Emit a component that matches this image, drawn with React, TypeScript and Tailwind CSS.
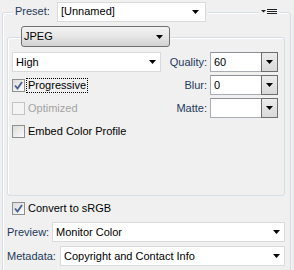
import React from "react";

const Arrow = () => (
  <svg width="7" height="4" viewBox="0 0 7 4" className="shrink-0">
    <path d="M0 0h7L3.5 4z" fill="#000" />
  </svg>
);

function Dropdown({ value, className }: { value: string; className: string }) {
  return (
    <div
      className={`flex h-[20px] items-center justify-between border border-[#dadada] bg-white pl-[3px] pr-[4px] ${className}`}
    >
      <span className="truncate">{value}</span>
      <Arrow />
    </div>
  );
}

function Combo({ value }: { value: string }) {
  return (
    <div className="flex h-[20px] w-[68px] items-center border border-[#a9adb4] border-t-[#8d9096] bg-white">
      <span className="flex-1 pl-[3px]">{value}</span>
      <div className="-mr-px -my-px flex h-[20px] w-[17px] items-center justify-center border border-[#6e6e6e] bg-gradient-to-b from-[#ececec] to-[#d9d9d9]">
        <Arrow />
      </div>
    </div>
  );
}

function Checkbox({
  label,
  checked,
  disabled,
  focused,
}: {
  label: string;
  checked?: boolean;
  disabled?: boolean;
  focused?: boolean;
}) {
  return (
    <div className="flex h-[20px] items-center gap-[1px]">
      <span
        className={`flex h-[13px] w-[13px] items-center justify-center border ${
          disabled
            ? "border-[#c4c4c4] bg-[#f4f4f4]"
            : "border-[#8e8f8f] bg-gradient-to-br from-[#dcdcdc] to-[#fbfbfb]"
        }`}
      >
        {checked && (
          <svg width="9" height="9" viewBox="0 0 9 9">
            <path d="M1 4.5L3.5 7.5L8 1" fill="none" stroke="#4a5f8f" strokeWidth="1.8" />
          </svg>
        )}
      </span>
      <span
        className={`px-[1px] leading-[13px] ${
          focused ? "border border-dotted border-black" : "border border-transparent"
        } ${disabled ? "text-[#a3a3a3]" : "text-black"}`}
      >
        {label}
      </span>
    </div>
  );
}

export default function App() {
  return (
    <div className="h-[270px] w-[294px] overflow-hidden bg-[#f0f0f0] pt-[12px] font-['Liberation_Sans',Arial,sans-serif] text-[11px] text-black">
      {/* outer group */}
      <div className="ml-[2px] h-[300px] w-[289px] rounded-[3px] border border-[#d5dfe5] shadow-[inset_1px_1px_0_#ffffff]">
        {/* preset row sits on the border */}
        <div className="-mt-[12px] flex h-[21px] items-center">
          <div className="ml-[10px] flex h-full items-center bg-[#f0f0f0] px-[2px]">
            <span className="w-[42px] text-[#1e395b]">Preset:</span>
            <Dropdown value="[Unnamed]" className="w-[149px] pr-[6px]" />
          </div>
          <div className="flex-1" />
          <div className="mr-[11px] flex h-full items-center bg-[#f0f0f0] px-[2px]">
            <svg width="16" height="7" viewBox="0 0 16 7">
              <path d="M0 2h5L2.5 4.5z" fill="#222" />
              <path d="M6 1.5h10M6 3.5h10M6 5.5h10" stroke="#222" strokeWidth="1" />
            </svg>
          </div>
        </div>

        {/* JPEG group */}
        <div className="ml-[4px] mt-[15px] h-[159px] w-[278px] rounded-[3px] border border-[#d5dfe5] shadow-[inset_1px_1px_0_#ffffff]">
          <div className="-mt-[12px] ml-[13px] flex h-[21px] w-[149px] items-center justify-between rounded-[3px] border border-[#707070] bg-gradient-to-b from-[#f3f3f3] via-[#e6e6e6] to-[#d2d2d2] pl-[2px] pr-[6px]">
            <span>JPEG</span>
            <Arrow />
          </div>

          <div className="ml-[4px] mt-[5px] grid grid-cols-[149px_49px_68px] gap-y-[3px]">
            <Dropdown value="High" className="w-[149px]" />
            <span className="flex items-center justify-end pr-[3px] text-[#1e395b]">Quality:</span>
            <Combo value="60" />

            <Checkbox label="Progressive" checked focused />
            <span className="flex items-center justify-end pr-[3px] text-[#1e395b]">Blur:</span>
            <Combo value="0" />

            <Checkbox label="Optimized" disabled />
            <span className="flex items-center justify-end pr-[3px] text-[#1e395b]">Matte:</span>
            <Combo value="" />

            <div className="col-span-3">
              <Checkbox label="Embed Color Profile" />
            </div>
          </div>
        </div>

        <div className="ml-[9px] mt-[2px]">
          <Checkbox label="Convert to sRGB" checked />
        </div>

        <div className="ml-[4px] mt-[4px] flex items-center">
          <span className="w-[45px] text-[#1e395b]">Preview:</span>
          <Dropdown value="Monitor Color" className="w-[233px]" />
        </div>

        <div className="ml-[4px] mt-[4px] flex items-center">
          <span className="w-[53px] text-[#1e395b]">Metadata:</span>
          <Dropdown value="Copyright and Contact Info" className="w-[225px]" />
        </div>
      </div>
    </div>
  );
}
